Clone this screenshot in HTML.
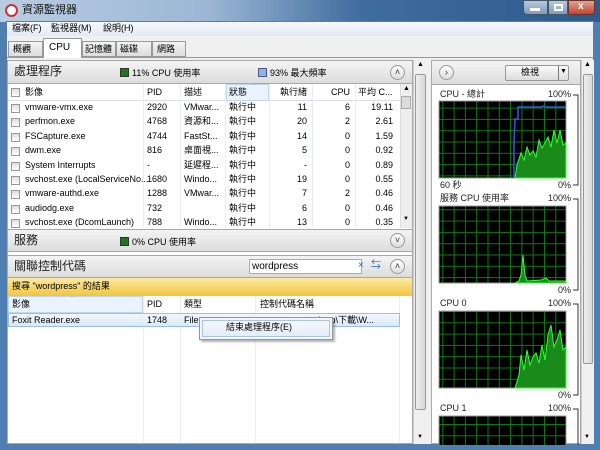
<!DOCTYPE html>
<html><head><meta charset="utf-8"><style>
*{margin:0;padding:0;box-sizing:border-box;line-height:1.1}
body{width:600px;height:450px;overflow:hidden;position:relative;font-family:"Liberation Sans","Noto Sans CJK TC",sans-serif;font-size:9px;color:#000;background:#4d7fb3}
.a{position:absolute}
.t{position:absolute;white-space:nowrap}
.hdr{position:absolute;background:linear-gradient(#f4f4f4,#dcdcdc);border:1px solid #a8a8a8}
.hdr .ttl{position:absolute;left:6px;top:4px;font-size:12px;color:#222}
.cb{position:absolute;width:9px;height:9px;border:1px solid #999;background:linear-gradient(#ddd,#fff)}
.rb{position:absolute;width:15px;height:15px;border-radius:50%;border:1px solid #999;background:linear-gradient(#fff,#ddd);font-size:9px;text-align:center;line-height:13px;color:#333}
.row{position:absolute;left:0;width:392px;height:14px}
.row span{position:absolute;top:2px;white-space:nowrap}
.r{text-align:right}
.sep{position:absolute;top:0;width:1px;background:#e6eef7}
.sq{display:inline-block;width:9px;height:9px;border:1px solid #333;vertical-align:-1px;margin-right:3px}
</style></head><body>
<div class="a" style="left:0;top:0;width:600px;height:22px;background:linear-gradient(90deg,#b9cde2 0%,#9bb6d4 35%,#3f6d9f 60%,#2d5a8c 100%)"></div>
<div class="a" style="left:5px;top:4px;width:13px;height:13px;border-radius:50%;background:#fff;border:2px solid #c33"></div>
<div class="t" style="left:22px;top:4px;font-size:11px;color:#111">資源監視器</div>
<div class="a" style="left:523px;top:0;width:25px;height:15px;border:1px solid #456;border-radius:0 0 0 4px;background:linear-gradient(#b6c8dc,#7e9cbc)"></div>
<div class="a" style="left:548px;top:0;width:20px;height:15px;border:1px solid #456;background:linear-gradient(#b6c8dc,#7e9cbc)"></div>
<div class="a" style="left:568px;top:0;width:27px;height:15px;border:1px solid #633;border-radius:0 0 4px 0;background:linear-gradient(#e2a392,#c2452e)"></div>
<div class="t" style="left:578px;top:1px;color:#fff;font-size:10px;font-weight:bold">x</div>
<div class="a" style="left:530px;top:8px;width:10px;height:3px;background:#fff"></div>
<div class="a" style="left:554px;top:4px;width:9px;height:7px;border:2px solid #fff"></div>
<div class="a" style="left:6px;top:21px;width:588px;height:424px;background:#f0f0f0;border:1px solid #5a7ea8"></div>
<div class="a" style="left:7px;top:22px;width:586px;height:14px;background:linear-gradient(#f6f8fc,#e4eaf4)"></div>
<div class="t" style="left:12px;top:24px">檔案(F)</div>
<div class="t" style="left:51px;top:24px">監視器(M)</div>
<div class="t" style="left:103px;top:24px">說明(H)</div>
<div class="a" style="left:7px;top:57px;width:586px;height:1px;background:#999"></div>
<div class="a" style="left:8px;top:41px;width:35px;height:16px;border:1px solid #999;background:linear-gradient(#f4f4f4,#ddd)"></div><div class="t" style="left:13px;top:45px">概觀</div>
<div class="a" style="left:43px;top:38px;width:39px;height:20px;border:1px solid #999;border-bottom:none;background:#fff"></div><div class="t" style="left:49px;top:42px;font-size:10px">CPU</div>
<div class="a" style="left:82px;top:41px;width:34px;height:16px;border:1px solid #999;background:linear-gradient(#f4f4f4,#ddd)"></div><div class="t" style="left:85px;top:45px">記憶體</div>
<div class="a" style="left:116px;top:41px;width:36px;height:16px;border:1px solid #999;background:linear-gradient(#f4f4f4,#ddd)"></div><div class="t" style="left:120px;top:45px">磁碟</div>
<div class="a" style="left:152px;top:41px;width:34px;height:16px;border:1px solid #999;background:linear-gradient(#f4f4f4,#ddd)"></div><div class="t" style="left:157px;top:45px">網路</div>
<div class="a" style="left:7px;top:60px;width:406px;height:384px;background:#fff;border:1px solid #aaa"></div>
<div class="hdr" style="left:7px;top:60px;width:406px;height:24px"><div class="ttl">處理程序</div>
<div class="t" style="left:112px;top:7px"><span class="sq" style="background:#1a7a1a"></span>11% CPU 使用率</div>
<div class="t" style="left:250px;top:7px"><span class="sq" style="background:#8ab4ec;border-color:#557"></span>93% 最大頻率</div>
<div class="rb" style="left:382px;top:4px">˄</div></div>
<div class="a" style="left:8px;top:84px;width:404px;height:144px;overflow:hidden">
<div class="a" style="left:0;top:0;width:404px;height:17px;border-bottom:1px solid #dde"></div>
<div class="a" style="left:218px;top:0;width:43px;height:17px;background:#eaf3fc;border:1px solid #bcd6ee"></div>
<div class="sep" style="left:135px;height:144px"></div><div class="sep" style="left:172px;height:144px"></div><div class="sep" style="left:217px;height:144px"></div><div class="sep" style="left:261px;height:144px"></div><div class="sep" style="left:304px;height:144px"></div><div class="sep" style="left:347px;height:144px"></div>
<div class="cb" style="left:3px;top:4px"></div>
<div class="t" style="left:17px;top:4px">影像</div><div class="t" style="left:139px;top:4px">PID</div><div class="t" style="left:176px;top:4px">描述</div><div class="t" style="left:221px;top:4px">狀態</div><div class="t" style="left:245px;top:-2px;font-size:7px;color:#557">^</div>
<div class="t" style="left:263px;top:4px;width:36px;text-align:right">執行緒</div><div class="t" style="left:306px;top:4px;width:36px;text-align:right">CPU</div><div class="t" style="left:350px;top:4px">平均 C...</div>
<div class="a" style="left:392px;top:0;width:12px;height:144px;background:#eee;border-left:1px solid #ddd"></div>
<div class="a" style="left:393px;top:12px;width:10px;height:13px;background:#dcdcdc;border:1px solid #aaa"></div>
<div class="t" style="left:395px;top:1px;font-size:7px">▲</div><div class="t" style="left:395px;top:132px;font-size:6px">▼</div>
<div style="position:absolute;left:0;top:17px;width:392px">
<div class="row" style="top:0"><i class="cb" style="left:3px;top:3px"></i><span style="left:17px">vmware-vmx.exe</span><span style="left:139px">2920</span><span style="left:176px">VMwar...</span><span style="left:221px">執行中</span><span class="r" style="left:263px;width:36px">11</span><span class="r" style="left:306px;width:36px">6</span><span class="r" style="left:350px;width:35px">19.11</span></div>
<div class="row" style="top:14.4px"><i class="cb" style="left:3px;top:3px"></i><span style="left:17px">perfmon.exe</span><span style="left:139px">4768</span><span style="left:176px">資源和...</span><span style="left:221px">執行中</span><span class="r" style="left:263px;width:36px">20</span><span class="r" style="left:306px;width:36px">2</span><span class="r" style="left:350px;width:35px">2.61</span></div>
<div class="row" style="top:28.8px"><i class="cb" style="left:3px;top:3px"></i><span style="left:17px">FSCapture.exe</span><span style="left:139px">4744</span><span style="left:176px">FastSt...</span><span style="left:221px">執行中</span><span class="r" style="left:263px;width:36px">14</span><span class="r" style="left:306px;width:36px">0</span><span class="r" style="left:350px;width:35px">1.59</span></div>
<div class="row" style="top:43.2px"><i class="cb" style="left:3px;top:3px"></i><span style="left:17px">dwm.exe</span><span style="left:139px">816</span><span style="left:176px">桌面視...</span><span style="left:221px">執行中</span><span class="r" style="left:263px;width:36px">5</span><span class="r" style="left:306px;width:36px">0</span><span class="r" style="left:350px;width:35px">0.92</span></div>
<div class="row" style="top:57.6px"><i class="cb" style="left:3px;top:3px"></i><span style="left:17px">System Interrupts</span><span style="left:139px">-</span><span style="left:176px">延遲程...</span><span style="left:221px">執行中</span><span class="r" style="left:263px;width:36px">-</span><span class="r" style="left:306px;width:36px">0</span><span class="r" style="left:350px;width:35px">0.89</span></div>
<div class="row" style="top:72px"><i class="cb" style="left:3px;top:3px"></i><span style="left:17px">svchost.exe (LocalServiceNo...</span><span style="left:139px">1680</span><span style="left:176px">Windo...</span><span style="left:221px">執行中</span><span class="r" style="left:263px;width:36px">19</span><span class="r" style="left:306px;width:36px">0</span><span class="r" style="left:350px;width:35px">0.55</span></div>
<div class="row" style="top:86.4px"><i class="cb" style="left:3px;top:3px"></i><span style="left:17px">vmware-authd.exe</span><span style="left:139px">1288</span><span style="left:176px">VMwar...</span><span style="left:221px">執行中</span><span class="r" style="left:263px;width:36px">7</span><span class="r" style="left:306px;width:36px">2</span><span class="r" style="left:350px;width:35px">0.46</span></div>
<div class="row" style="top:100.8px"><i class="cb" style="left:3px;top:3px"></i><span style="left:17px">audiodg.exe</span><span style="left:139px">732</span><span style="left:221px">執行中</span><span class="r" style="left:263px;width:36px">6</span><span class="r" style="left:306px;width:36px">0</span><span class="r" style="left:350px;width:35px">0.46</span></div>
<div class="row" style="top:115.2px"><i class="cb" style="left:3px;top:3px"></i><span style="left:17px">svchost.exe (DcomLaunch)</span><span style="left:139px">788</span><span style="left:176px">Windo...</span><span style="left:221px">執行中</span><span class="r" style="left:263px;width:36px">13</span><span class="r" style="left:306px;width:36px">0</span><span class="r" style="left:350px;width:35px">0.35</span></div>
</div></div>
<div class="hdr" style="left:7px;top:229px;width:406px;height:23px"><div class="ttl">服務</div>
<div class="t" style="left:112px;top:7px"><span class="sq" style="background:#1a7a1a"></span>0% CPU 使用率</div>
<div class="rb" style="left:382px;top:3px">˅</div></div>
<div class="hdr" style="left:7px;top:255px;width:406px;height:23px"><div class="ttl">關聯控制代碼</div>
<div class="a" style="left:241px;top:3px;width:113px;height:15px;background:#fff;border:1px solid #aaa"></div>
<div class="t" style="left:244px;top:5px;font-size:10px">wordpress</div>
<div class="t" style="left:350px;top:4px;color:#36c;font-size:10px">×</div>
<div class="t" style="left:363px;top:4px;color:#36c;font-size:10px">⇆</div>
<div class="rb" style="left:382px;top:3px">˄</div></div>
<div class="a" style="left:8px;top:278px;width:404px;height:18px;background:linear-gradient(#fbe9a6,#f2c53c)"></div>
<div class="t" style="left:12px;top:282px">搜尋 "wordpress" 的結果</div>
<div class="a" style="left:8px;top:296px;width:404px;height:147px;overflow:hidden">
<div class="a" style="left:0;top:0;width:135px;height:17px;background:#eaf3fc;border:1px solid #bcd6ee"></div>
<div class="sep" style="left:135px;height:147px"></div><div class="sep" style="left:172px;height:147px"></div><div class="sep" style="left:247px;height:147px"></div><div class="sep" style="left:391px;height:147px"></div>
<div class="t" style="left:4px;top:4px">影像</div><div class="t" style="left:63px;top:-2px;font-size:7px;color:#557">^</div>
<div class="t" style="left:139px;top:4px">PID</div><div class="t" style="left:176px;top:4px">類型</div><div class="t" style="left:252px;top:4px">控制代碼名稱</div>
<div class="a" style="left:0;top:17px;width:392px;height:14px;background:linear-gradient(#f2f7fd,#dbe9f8);border:1px solid #9ac0e8"></div>
<div class="t" style="left:4px;top:20px">Foxit Reader.exe</div><div class="t" style="left:139px;top:20px">1748</div><div class="t" style="left:176px;top:20px">File</div><div class="t" style="left:306px;top:20px">sktop\下載\W...</div>
</div>
<div class="a" style="left:199px;top:317px;width:134px;height:23px;background:#f5f5f5;border:1px solid #979797;box-shadow:2px 2px 2px rgba(0,0,0,.3)"></div>
<div class="a" style="left:202px;top:320px;width:128px;height:17px;background:linear-gradient(#f6f9fd,#e3edf8);border:1px solid #aac4e4"></div>
<div class="t" style="left:226px;top:323px">結束處理程序(E)</div>
<div class="a" style="left:413px;top:60px;width:15px;height:384px;background:#f0f0f0;border-left:1px solid #ccc"></div>
<div class="a" style="left:415px;top:74px;width:11px;height:336px;background:linear-gradient(90deg,#eee,#d8d8d8);border:1px solid #999;border-radius:2px"></div>
<div class="t" style="left:417px;top:61px;font-size:7px">▲</div><div class="t" style="left:417px;top:434px;font-size:6px">▼</div>
<div class="a" style="left:431px;top:60px;width:150px;height:384px;background:#fff;border:1px solid #aaa"></div>
<div class="hdr" style="left:431px;top:60px;width:150px;height:25px">
<div class="rb" style="left:7px;top:4px">›</div>
<div class="a" style="left:73px;top:4px;width:64px;height:16px;border:1px solid #999;border-radius:2px;background:linear-gradient(#fafafa,#ddd)"></div>
<div class="t" style="left:89px;top:7px">檢視</div>
<div class="a" style="left:126px;top:5px;width:1px;height:14px;background:#777"></div><div class="t" style="left:128px;top:7px;font-size:7px">▼</div>
</div>
<svg class="a" style="left:431px;top:85px" width="150" height="360">
<defs><pattern id="g" x="0" y="0" width="11.3" height="11.3" patternUnits="userSpaceOnUse"><rect width="11.3" height="11.3" fill="#000"/><path d="M0 0.5H11.3M0.5 0V11.3" stroke="#0f7a0f" stroke-width="1"/></pattern></defs>
<g font-family="Liberation Sans,Noto Sans CJK TC,sans-serif" font-size="9" fill="#222">
<text x="9" y="12">CPU - 總計</text><text x="140" y="12" text-anchor="end">100%</text>
<text x="9" y="103">60 秒</text><text x="140" y="103" text-anchor="end">0%</text>
<text x="9" y="116">服務 CPU 使用率</text><text x="140" y="116" text-anchor="end">100%</text>
<text x="140" y="208" text-anchor="end">0%</text>
<text x="9" y="221">CPU 0</text><text x="140" y="221" text-anchor="end">100%</text>
<text x="140" y="313" text-anchor="end">0%</text>
<text x="9" y="326">CPU 1</text><text x="140" y="326" text-anchor="end">100%</text>
</g>
<g stroke="#333" fill="none"><path d="M142 10H147V100H142M142 114H147V205H142M142 219H147V310H142M142 324H147V360"/></g>
<rect x="8" y="16" width="127" height="77" fill="url(#g)" stroke="#999"/>
<rect x="8" y="121" width="127" height="77" fill="url(#g)" stroke="#999"/>
<rect x="8" y="226" width="127" height="77" fill="url(#g)" stroke="#999"/>
<rect x="8" y="331" width="127" height="30" fill="url(#g)" stroke="#999"/>
<path d="M84 93L86 80L90 68L93 75L96 62L99 70L102 66L105 72L108 55L111 63L114 58L117 52L120 62L123 45L126 58L129 45L132 60L135 58V93Z" fill="#1a8a1a" stroke="#3f3" stroke-width="1"/>
<path d="M83 93V58L84 34H87V22H110L113 21L115 22H135" fill="none" stroke="#2a5ce8" stroke-width="1.5"/>
<path d="M84 198L88 196L90 190L92 170L94 190L96 196L110 195L115 193L118 196L135 196V198Z" fill="#1a8a1a" stroke="#3f3"/>
<path d="M84 303L88 290L90 270L93 285L96 265L99 280L102 272L105 268L108 278L111 260L114 275L117 250L120 240L123 262L126 255L129 245L132 265L135 262V303Z" fill="#1a8a1a" stroke="#3f3"/>
</svg>
<div class="a" style="left:581px;top:60px;width:13px;height:384px;background:#f0f0f0;border-left:1px solid #ccc"></div>
<div class="a" style="left:583px;top:74px;width:10px;height:290px;background:linear-gradient(90deg,#eee,#d8d8d8);border:1px solid #999;border-radius:2px"></div>
<div class="t" style="left:584px;top:61px;font-size:7px">▲</div><div class="t" style="left:584px;top:434px;font-size:6px">▼</div>
</body></html>
